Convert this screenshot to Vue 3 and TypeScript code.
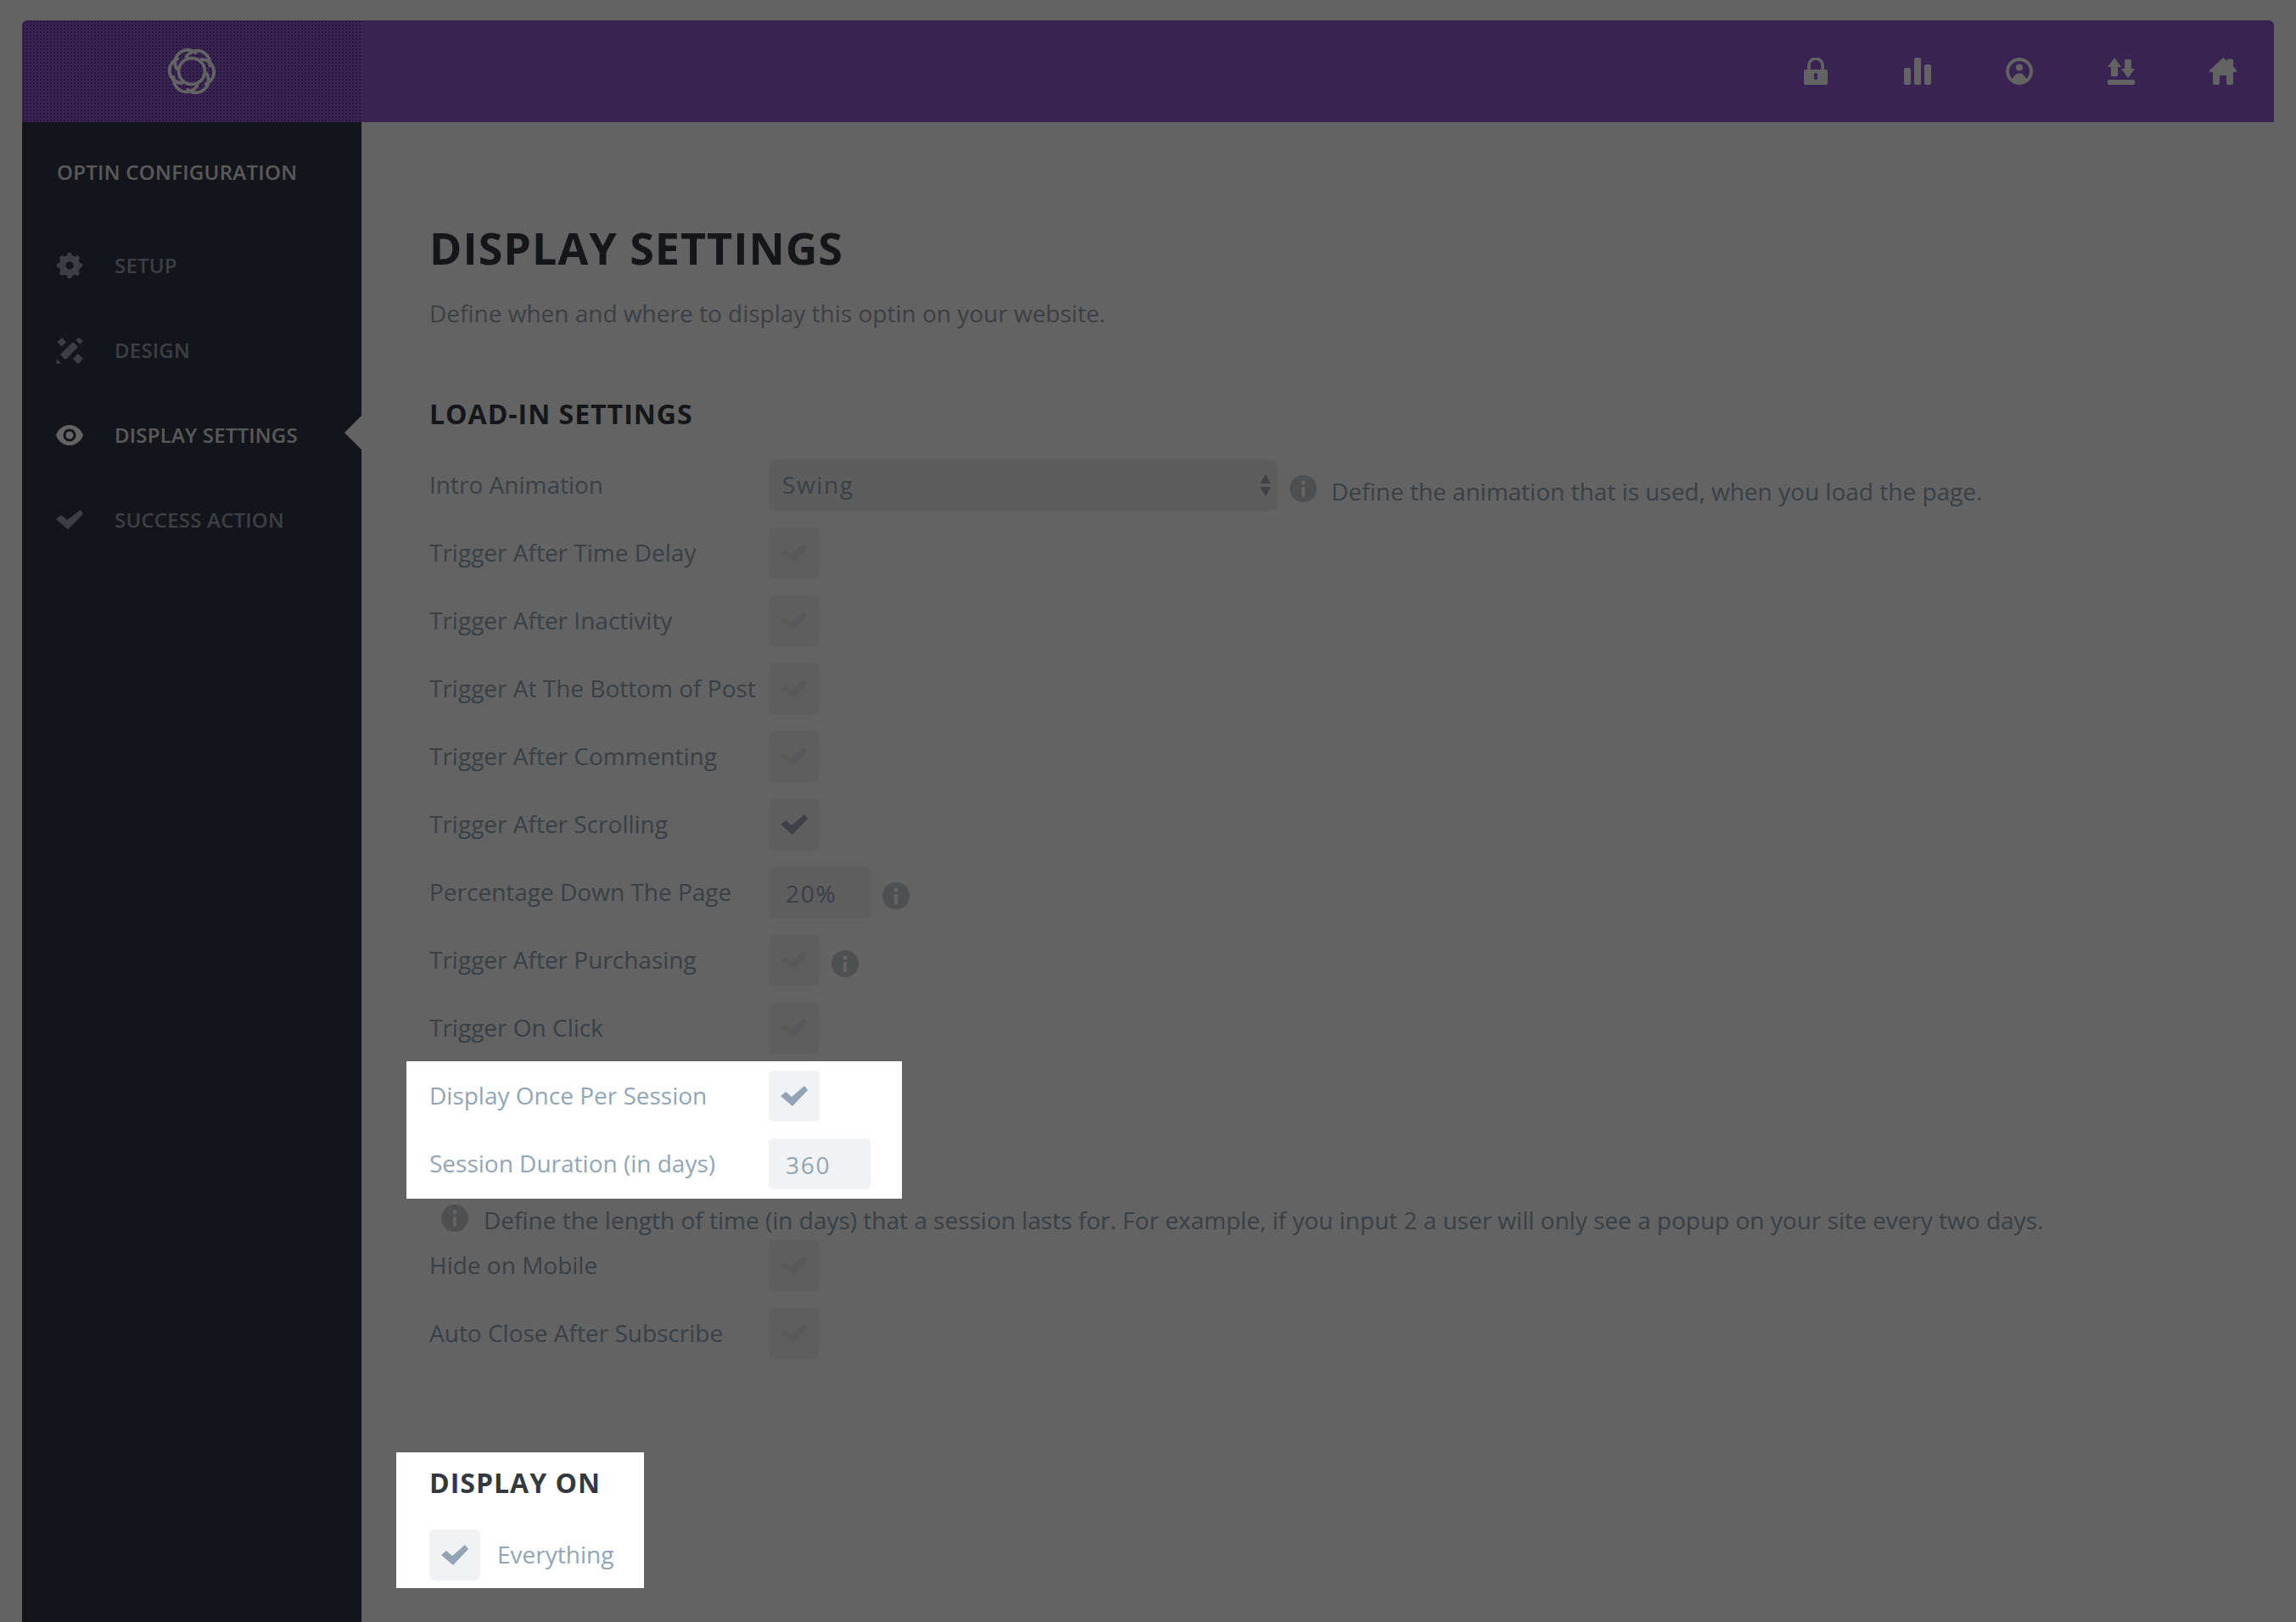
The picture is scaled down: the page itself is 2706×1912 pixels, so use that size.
<script setup lang="ts">
const topIcons = ['lock', 'bars', 'user', 'arrows', 'home']
const navItems = [
  { id: 'gear', label: 'SETUP', active: false },
  { id: 'design', label: 'DESIGN', active: false },
  { id: 'eye', label: 'DISPLAY SETTINGS', active: true },
  { id: 'check', label: 'SUCCESS ACTION', active: false },
]
const rowsA = [
  { label: 'Trigger After Time Delay', on: false, info: false },
  { label: 'Trigger After Inactivity', on: false, info: false },
  { label: 'Trigger At The Bottom of Post', on: false, info: false },
  { label: 'Trigger After Commenting', on: false, info: false },
  { label: 'Trigger After Scrolling', on: true, info: false },
]
const rowsB = [
  { label: 'Trigger After Purchasing', on: false, info: true },
  { label: 'Trigger On Click', on: false, info: false },
]
const rowsC = ['Hide on Mobile', 'Auto Close After Subscribe']
const petals = [30, 90, 150, 210, 270, 330]
const teeth = [0, 45, 90, 135, 180, 225, 270, 315]
</script>

<template>
  <div class="page">
    <header class="topbar">
      <div class="logo-cell">
        <svg class="logo" viewBox="-33 -33 66 66" fill="none" stroke="#fff" stroke-width="3.6" stroke-linecap="round">
          <circle cx="0" cy="0" r="15" />
          <path v-for="p in petals" :key="p" d="M-13.600 -11 A14.500 14.500 0 0 1 14.500 -16" :transform="`rotate(${p})`" />
        </svg>
      </div>
      <nav class="top-icons">
        <template v-for="t in topIcons" :key="t">
          <svg class="top-icon" viewBox="0 0 32 32" fill="#fff">
            <g v-if="t === 'lock'">
              <path fill-rule="evenodd" d="M4 14h24a2 2 0 0 1 2 2v14a2 2 0 0 1-2 2H4a2 2 0 0 1-2-2V16a2 2 0 0 1 2-2zm12 4c-1.200 0-2 1-2 2v4c0 1 .8 2 2 2s2-1 2-2v-4c0-1-.8-2-2-2z" />
              <path d="M8 15V9a8 8 0 0 1 16 0v6" fill="none" stroke="#fff" stroke-width="3.6" />
            </g>
            <g v-else-if="t === 'bars'">
              <rect x="0" y="12" width="8" height="20" rx="2" />
              <rect x="12" y="0" width="8" height="32" rx="2" />
              <rect x="24" y="8" width="8" height="24" rx="2" />
            </g>
            <g v-else-if="t === 'user'">
              <circle cx="16" cy="16" r="14" fill="none" stroke="#fff" stroke-width="3.8" />
              <circle cx="16" cy="11.500" r="4" />
              <path d="M7.500 26.500C9 21 12 18.500 16 18.500s7 2.500 8.500 8c-2.500 2.500-5.500 3.500-8.500 3.500s-6-1-8.500-3.500z" />
            </g>
            <g v-else-if="t === 'arrows'">
              <path d="M8 0l8 11h-4v9.500a1.500 1.500 0 0 1-1.500 1.500h-5A1.500 1.500 0 0 1 4 20.500V11H0z" />
              <path d="M21.500 2h5A1.500 1.500 0 0 1 28 3.500V13h4l-8 11-8-11h4V3.500A1.500 1.500 0 0 1 21.500 2z" />
              <rect x="0" y="26" width="32" height="6" rx="2" />
            </g>
            <path v-else d="M16 0l5 4V3a1.500 1.500 0 0 1 1.500-1.500h4A1.500 1.500 0 0 1 28 3v7l4 5v1a1 1 0 0 1-1 1h-3v13a2 2 0 0 1-2 2h-4a2 2 0 0 1-2-2v-9h-8v9a2 2 0 0 1-2 2H6a2 2 0 0 1-2-2V17H1a1 1 0 0 1-1-1v-1z" />
          </svg>
        </template>
      </nav>
    </header>

    <div class="body">
      <aside class="sidebar">
        <h2 class="side-title">OPTIN CONFIGURATION</h2>
        <ul class="side-nav">
          <li v-for="item in navItems" :key="item.id" class="side-item" :class="{ active: item.active }">
            <svg class="side-icon" viewBox="0 0 32 32" fill="currentColor">
              <g v-if="item.id === 'gear'">
                <circle cx="16" cy="16" r="8.500" fill="none" stroke="currentColor" stroke-width="7.500" />
                <path v-for="a in teeth" :key="a" d="M12 7l2-6h4l2 6z" :transform="`rotate(${a} 16 16)`" />
              </g>
              <g v-else-if="item.id === 'design'">
                <polygon points="1.500,6 7,1 12,6.500 6.500,11.500" />
                <polygon points="5,21 20,6 26,12 11,27" />
                <polygon points="23,4 27,1 32,5 28.500,9" />
                <polygon points="20,26 26,20 32,26 26,32" />
                <polygon points="0,32 1,26 6,31" />
              </g>
              <path v-else-if="item.id === 'eye'" fill-rule="evenodd" d="M16 4c8 0 14 6 16 12-2 6-8 12-16 12S2 22 0 16C2 10 8 4 16 4zm0 4.500a7.500 7.500 0 1 0 0 15 7.500 7.500 0 0 0 0-15zm0 3a4.500 4.500 0 1 1 0 9 4.500 4.500 0 0 1 0-9z" />
              <polygon v-else points="0,15 6,10 13,16 29,4 32,9 14,27" />
            </svg>
            <span class="side-label">{{ item.label }}</span>
            <span v-if="item.active" class="notch"></span>
          </li>
        </ul>
      </aside>

      <main class="main">
        <h1 class="title">DISPLAY SETTINGS</h1>
        <p class="sub">Define when and where to display this optin on your website.</p>
        <h2 class="section">LOAD-IN SETTINGS</h2>

        <div class="rows">
          <div class="row">
            <label class="label">Intro Animation</label>
            <div class="select">
              <span class="select-value">Swing</span>
              <svg class="updown" viewBox="0 0 13 26" fill="#a5a9b3"><path d="M6.500 0L13 11H0zM0 15h13L6.500 26z" /></svg>
            </div>
            <svg class="info" viewBox="0 0 32 32" fill="#c8cbd0"><path fill-rule="evenodd" d="M16 0a16 16 0 1 1 0 32 16 16 0 0 1 0-32zm-2 6.500v4.500h4V6.500zm0 7.500v12h4V14z" /></svg>
            <span class="hint">Define the animation that is used, when you load the page.</span>
          </div>

          <div v-for="r in rowsA" :key="r.label" class="row">
            <label class="label">{{ r.label }}</label>
            <span class="box"><svg class="tick" :class="{ on: r.on }" viewBox="0 0 32 24" fill="currentColor"><polygon points="0,12 6,7 13,13 28,0 32,5 14,24" /></svg></span>
          </div>

          <div class="row">
            <label class="label">Percentage Down The Page</label>
            <span class="field">20%</span>
            <svg class="info side" viewBox="0 0 32 32" fill="#c8cbd0"><path fill-rule="evenodd" d="M16 0a16 16 0 1 1 0 32 16 16 0 0 1 0-32zm-2 6.500v4.500h4V6.500zm0 7.500v12h4V14z" /></svg>
          </div>

          <div v-for="r in rowsB" :key="r.label" class="row">
            <label class="label">{{ r.label }}</label>
            <span class="box"><svg class="tick" viewBox="0 0 32 24" fill="currentColor"><polygon points="0,12 6,7 13,13 28,0 32,5 14,24" /></svg></span>
            <svg v-if="r.info" class="info side" viewBox="0 0 32 32" fill="#c8cbd0"><path fill-rule="evenodd" d="M16 0a16 16 0 1 1 0 32 16 16 0 0 1 0-32zm-2 6.500v4.500h4V6.500zm0 7.500v12h4V14z" /></svg>
          </div>

          <div class="spot spot-rows">
            <div class="row">
              <label class="label">Display Once Per Session</label>
              <span class="box"><svg class="tick on lit" viewBox="0 0 32 24" fill="currentColor"><polygon points="0,12 6,7 13,13 28,0 32,5 14,24" /></svg></span>
            </div>
            <div class="row">
              <label class="label">Session Duration (in days)</label>
              <span class="field">360</span>
            </div>
          </div>

          <div class="desc">
            <svg class="info" viewBox="0 0 32 32" fill="#c8cbd0"><path fill-rule="evenodd" d="M16 0a16 16 0 1 1 0 32 16 16 0 0 1 0-32zm-2 6.500v4.500h4V6.500zm0 7.500v12h4V14z" /></svg>
            <span class="desc-text">Define the length of time (in days) that a session lasts for. For example, if you input 2 a user will only see a popup on your site every two days.</span>
          </div>

          <div v-for="l in rowsC" :key="l" class="row">
            <label class="label">{{ l }}</label>
            <span class="box"><svg class="tick" viewBox="0 0 32 24" fill="currentColor"><polygon points="0,12 6,7 13,13 28,0 32,5 14,24" /></svg></span>
          </div>
        </div>

        <section class="spot spot-on">
          <h2 class="section flush">DISPLAY ON</h2>
          <div class="on-row">
            <span class="box"><svg class="tick on lit" viewBox="0 0 32 24" fill="currentColor"><polygon points="0,12 6,7 13,13 28,0 32,5 14,24" /></svg></span>
            <span class="on-label">Everything</span>
          </div>
        </section>
      </main>
    </div>

    <div class="dim"></div>
  </div>
</template>

<style>
html, body { margin: 0; background: #fff; overflow: hidden; }
</style>

<style scoped>
.page {
  width: 2706px;
  height: 1912px;
  box-sizing: border-box;
  padding: 24px 26px 0;
  overflow: hidden;
  font-family: "Open Sans", "Liberation Sans", sans-serif;
  color: #92a5b5;
}
.dim {
  position: fixed;
  inset: 0;
  z-index: 10;
  background: rgba(0, 0, 0, 0.61);
}
.topbar {
  display: flex;
  align-items: stretch;
  justify-content: space-between;
  height: 120px;
  background: #925ad4;
  border-radius: 6px 6px 0 0;
}
.logo-cell {
  width: 400px;
  display: flex;
  align-items: center;
  justify-content: center;
  border-top-left-radius: 6px;
  background-image: radial-gradient(rgba(20, 0, 50, 0.4) 0.9px, transparent 1.1px);
  background-size: 4px 4px;
}
.logo { width: 68px; height: 68px; display: block; }
.top-icons { display: flex; align-items: center; gap: 88px; padding-right: 44px; }
.top-icon { width: 32px; height: 32px; display: block; }

.body { display: flex; height: 1768px; }
.sidebar { width: 400px; flex: none; background: #323743; padding-top: 43px; box-sizing: border-box; }
.side-title {
  margin: 0 0 44px 41px;
  font-size: 24px;
  line-height: 32px;
  font-weight: 600;
  letter-spacing: 0.3px;
  color: #e4e5e8;
}
.side-nav { list-style: none; margin: 0; padding: 0; }
.side-item {
  position: relative;
  display: flex;
  align-items: center;
  gap: 37px;
  height: 100px;
  padding-left: 40px;
  color: #9aa1ad;
}
.side-icon { width: 32px; height: 32px; flex: none; }
.side-label { font-size: 24px; font-weight: 600; letter-spacing: 0.2px; margin-top: -2px; }
.side-item.active { color: #e4e5e8; }
.side-item.active .side-icon { color: #fff; }
.notch {
  position: absolute;
  right: 0;
  top: 27px;
  width: 0;
  height: 0;
  border-top: 20px solid transparent;
  border-bottom: 20px solid transparent;
  border-right: 20px solid #fff;
}

.main { flex: 1; padding: 118px 0 0 80px; min-width: 0; }
.title {
  margin: 0;
  font-size: 52px;
  line-height: 60px;
  font-weight: 700;
  letter-spacing: 1px;
  color: #343940;
}
.sub {
  margin: 27px 0 0;
  font-size: 28px;
  line-height: 40px;
  color: #9aa5b1;
}
.section {
  margin: 79px 0 34px;
  font-size: 32px;
  line-height: 40px;
  font-weight: 700;
  letter-spacing: 1px;
  color: #343940;
}
.rows { display: flex; flex-direction: column; gap: 20px; }
.row { display: flex; align-items: center; height: 60px; }
.label {
  width: 400px;
  flex: none;
  font-size: 28px;
  line-height: 58px;
  height: 60px;
  color: #92a5b5;
}
.select {
  width: 600px;
  height: 60px;
  flex: none;
  box-sizing: border-box;
  display: flex;
  align-items: center;
  justify-content: space-between;
  padding: 0 8px 0 16px;
  background: #f0f0f1;
  border-radius: 8px;
  font-size: 28px;
  letter-spacing: 1.6px;
}
.select-value { margin-top: -2px; }
.updown { width: 13px; height: 26px; }
.info { width: 32px; height: 32px; flex: none; margin-top: 8px; }
.select + .info { margin-left: 14px; }
.info.side { margin-left: 14px; }
.hint { margin-left: 17px; margin-top: 14px; font-size: 28px; line-height: 40px; color: #92a5b5; }
.box {
  width: 60px;
  height: 60px;
  flex: none;
  display: flex;
  align-items: center;
  justify-content: center;
  background: #f1f2f4;
  border-radius: 6px;
}
.tick { width: 32px; height: 24px; color: #e4e6e9; }
.tick.on { color: #a0a8b6; }
.tick.lit { color: #93a5b4; }
.field {
  width: 120px;
  height: 60px;
  flex: none;
  box-sizing: border-box;
  padding: 3px 0 0 20px;
  line-height: 56px;
  background: #f1f2f4;
  border-radius: 6px;
  font-size: 28px;
  letter-spacing: 1.8px;
}
.spot {
  position: relative;
  z-index: 11;
  background: #fff;
}
.spot-rows {
  display: flex;
  flex-direction: column;
  gap: 20px;
  width: 584px;
  box-sizing: border-box;
  margin: -11px 0 -11px -27px;
  padding: 11px 0 11px 27px;
}
.desc {
  display: flex;
  align-items: flex-start;
  height: 36px;
  margin: -4px 0 -12px 14px;
  gap: 18px;
  white-space: nowrap;
}
.desc .info { margin-top: 2px; }
.desc-text { font-size: 28px; line-height: 36px; margin-top: 2px; color: #92a5b5; }
.spot-on {
  width: 292px;
  box-sizing: border-box;
  margin: 110px 0 0 -39px;
  padding: 16px 0 9px 39px;
}
.section.flush { margin: 0 0 35px; }
.on-row { display: flex; align-items: center; gap: 20px; }
.on-label { font-size: 28px; line-height: 60px; margin-top: -3px; color: #92a5b5; }
</style>
